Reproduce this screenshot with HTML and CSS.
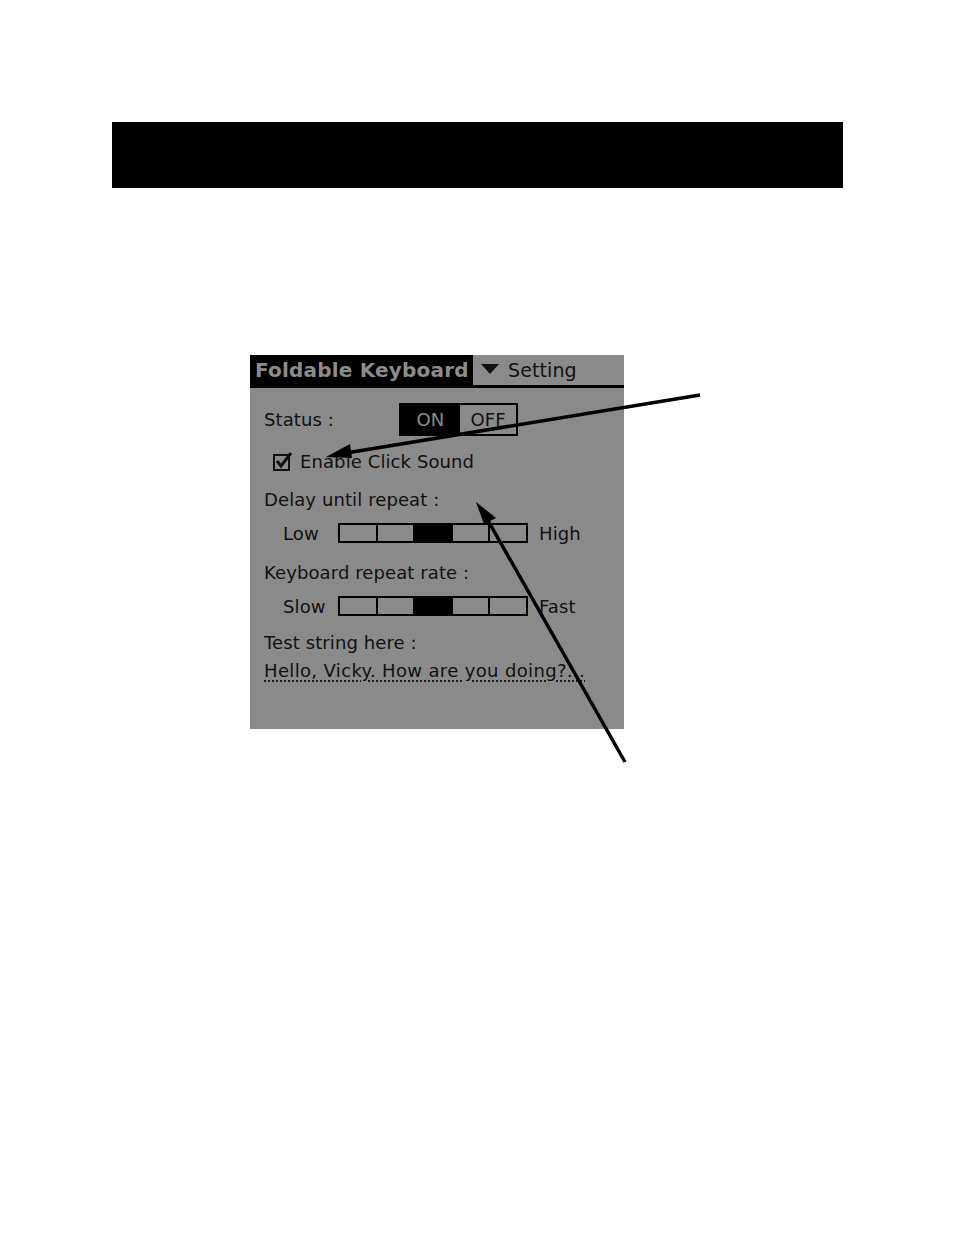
FILE: index.html
```html
<!DOCTYPE html>
<html>
<head>
<meta charset="utf-8">
<link rel="stylesheet" href="styles.css">
</head>
<body>
<div class="page">
  <div class="header-bar"></div>
  <div class="screen">
    <div class="titlebar">
      <div class="tab">Foldable Keyboard</div>
      <div class="menu"><span class="tri"></span><span>Setting</span></div>
    </div>
    <div class="content">
      <div class="row status-row">
        <span class="status-label">Status :</span>
        <div class="seg"><span class="seg-on">ON</span><span class="seg-off">OFF</span></div>
      </div>
      <div class="row check-row">
        <svg class="checkbox" width="20" height="20" viewBox="0 0 20 20">
          <rect x="1" y="4" width="15" height="15" fill="none" stroke="#111" stroke-width="2"/>
          <path d="M4 10 L8 15 L18 2" fill="none" stroke="#111" stroke-width="3"/>
        </svg>
        <span>Enable Click Sound</span>
      </div>
      <div class="row label-row r-delay">Delay until repeat :</div>
      <div class="row slider-row">
        <span class="slider-label">Low</span>
        <div class="slider"><span></span><span></span><span class="on"></span><span></span><span></span></div>
        <span class="slider-end">High</span>
      </div>
      <div class="row label-row r-rate">Keyboard repeat rate :</div>
      <div class="row slider-row">
        <span class="slider-label">Slow</span>
        <div class="slider"><span></span><span></span><span class="on"></span><span></span><span></span></div>
        <span class="slider-end">Fast</span>
      </div>
      <div class="row label-row r-test">Test string here :</div>
      <div class="row label-row r-hello"><span class="dotted">Hello, Vicky. How are you doing?...</span></div>
    </div>
  </div>
  <svg class="arrows" width="954" height="1235" viewBox="0 0 954 1235">
    <line x1="700" y1="395" x2="340" y2="454" stroke="#000" stroke-width="3.5"/>
    <polygon points="326,457 350,444 352,458" fill="#000"/>
    <line x1="625" y1="762" x2="482" y2="510" stroke="#000" stroke-width="3.5"/>
    <polygon points="476,502 496,518 484,524" fill="#000"/>
  </svg>
</div>
</body>
</html>
```
FILE: styles.css
```css
html, body {
  margin: 0;
  padding: 0;
  background: #fff;
}
.page {
  position: relative;
  width: 954px;
  height: 1235px;
  overflow: hidden;
  font-family: "DejaVu Sans", sans-serif;
}
.header-bar {
  margin: 122px 0 0 112px;
  width: 731px;
  height: 66px;
  background: #000;
}
.screen {
  margin: 167px 0 0 250px;
  width: 374px;
  height: 374px;
  background: #8a8a8a;
  color: #111;
  font-size: 18px;
  letter-spacing: 0.1px;
}
.titlebar {
  display: flex;
  height: 30px;
  border-bottom: 3px solid #000;
}
.tab {
  background: #000;
  color: #8c8c8c;
  width: 218px;
  padding-left: 5px;
  font-weight: bold;
  font-size: 20px;
  letter-spacing: 0.2px;
  display: flex;
  align-items: center;
  white-space: nowrap;
}
.menu {
  display: flex;
  align-items: center;
  padding-left: 8px;
  gap: 9px;
  font-size: 19px;
}
.tri {
  width: 0;
  height: 0;
  border-left: 9px solid transparent;
  border-right: 9px solid transparent;
  border-top: 10px solid #111;
  margin-top: -2px;
}
.content {
  padding-left: 14px;
}
.row {
  display: flex;
  align-items: center;
}
.status-row {
  margin-top: 15px;
  height: 33px;
}
.status-label {
  width: 135px;
}
.seg {
  display: flex;
  width: 119px;
  height: 33px;
  box-sizing: border-box;
  border: 2px solid #000;
}
.seg-on {
  width: 59px;
  background: #000;
  color: #8c8c8c;
  display: flex;
  align-items: center;
  justify-content: center;
}
.seg-off {
  flex: 1;
  display: flex;
  align-items: center;
  justify-content: center;
}
.check-row {
  margin-top: 13px;
  height: 24px;
  padding-left: 9px;
  gap: 7px;
}
.label-row {
  height: 24px;
}
.r-delay { margin-top: 14px; }
.r-rate { margin-top: 17px; }
.r-test { margin-top: 14px; }
.r-hello { margin-top: 4px; letter-spacing: 0.35px; }
.slider-row {
  margin-top: 12px;
  height: 20px;
  padding-left: 19px;
}
.slider-label {
  width: 55px;
}
.slider {
  display: flex;
  width: 190px;
  height: 20px;
  box-sizing: border-box;
  border: 2px solid #000;
}
.slider span {
  flex: 1;
  border-left: 2px solid #000;
}
.slider span:first-child {
  border-left: none;
}
.slider span.on {
  background: #000;
}
.slider-end {
  margin-left: 11px;
}
.dotted {
  text-decoration: underline dotted #111;
  text-underline-offset: 4px;
}
.arrows {
  position: absolute;
  left: 0;
  top: 0;
}
```
